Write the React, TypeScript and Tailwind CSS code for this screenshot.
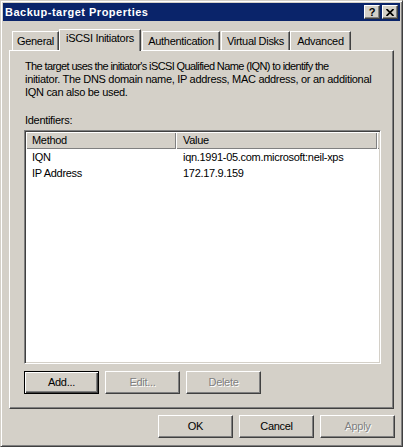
import React from 'react'

const raised =
  'border border-t-white border-l-white border-r-[#404040] border-b-[#404040] shadow-[inset_-1px_-1px_0_#808080]'

function Button({ label, disabled, isDefault }: { label: string; disabled?: boolean; isDefault?: boolean }) {
  const frame = isDefault
    ? 'border border-black shadow-[inset_1px_1px_0_#fff,inset_-1px_-1px_0_#404040,inset_-2px_-2px_0_#808080]'
    : raised
  return (
    <div className={`w-[75px] h-[23px] flex items-center justify-center bg-[#d4d0c8] ${frame}`}>
      <span
        className={
          disabled ? 'text-[#808080] [text-shadow:1px_1px_0_#fff]' : 'text-black'
        }
      >
        {label}
      </span>
    </div>
  )
}

function Tab({ label, width, selected, className = '' }: { label: string; width: string; selected?: boolean; className?: string }) {
  if (selected) {
    return (
      <div
        className={`${width} h-[22px] -mb-px relative z-10 bg-[#d4d0c8] border-t border-l border-r border-t-white border-l-white border-r-[#404040] shadow-[inset_-1px_0_0_#808080] flex justify-center pt-[2px] ${className}`}
      >
        {label}
      </div>
    )
  }
  return (
    <div
      className={`${width} h-[19px] bg-[#d4d0c8] border-t border-l border-r border-t-white border-l-white border-r-[#404040] shadow-[inset_-1px_0_0_#808080] flex justify-center pt-[3px] ${className}`}
    >
      {label}
    </div>
  )
}

export default function App() {
  const rows = [
    { method: 'IQN', value: 'iqn.1991-05.com.microsoft:neil-xps' },
    { method: 'IP Address', value: '172.17.9.159' },
  ]

  return (
    <div className="w-[403px] h-[447px] bg-[#d4d0c8] font-['Liberation_Sans',Arial,sans-serif] text-[11px] leading-[13px] tracking-[-0.3px] text-black">
      <div className="h-full border border-t-[#d4d0c8] border-l-[#d4d0c8] border-r-[#404040] border-b-[#404040] shadow-[inset_1px_1px_0_#fff,inset_-1px_-1px_0_#808080] p-[2px] flex flex-col">
        {/* title bar */}
        <div className="h-[18px] bg-[#0a246a] flex items-center justify-between pl-[2px] pr-[2px]">
          <span className="text-white font-bold tracking-[0.5px]">Backup-target Properties</span>
          <div className="flex gap-[2px]">
            <div className={`w-[16px] h-[14px] bg-[#d4d0c8] ${raised} flex items-center justify-center`}>
              <span className="font-bold text-[11px] leading-none tracking-normal">?</span>
            </div>
            <div className={`w-[16px] h-[14px] bg-[#d4d0c8] ${raised} flex items-center justify-center`}>
              <svg width="8" height="7" viewBox="0 0 8 7">
                <path d="M0.5 0 L7.5 7 M7.5 0 L0.5 7" stroke="#000" strokeWidth="1.7" />
              </svg>
            </div>
          </div>
        </div>

        <div className="px-[6px]">
          {/* tabs */}
          <div className="h-[21px] mt-[8px] flex items-end">
            <Tab label="General" width="w-[47px]" className="ml-[3px]" />
            <Tab label="iSCSI Initiators" width="w-[82px]" selected />
            <Tab label="Authentication" width="w-[78px]" className="ml-[1px]" />
            <Tab label="Virtual Disks" width="w-[69px]" className="ml-[1px]" />
            <Tab label="Advanced" width="w-[61px]" />
          </div>

          {/* tab page */}
          <div className="h-[359px] border border-t-white border-l-white border-r-[#404040] border-b-[#404040] shadow-[inset_-1px_-1px_0_#808080] pl-[14px] pr-[12px] pt-[9px]">
            <p className="ml-[1px]">
              <span className="tracking-[-0.62px]">
                The target uses the initiator's iSCSI Qualified Name (IQN) to identify the
              </span>
              <br />
              initiator. The DNS domain name, IP address, MAC address, or an additional
              <br />
              IQN can also be used.
            </p>
            <p className="ml-[1px] mt-[15px]">Identifiers:</p>

            <div className="mt-[3px] h-[234px] bg-white border border-t-[#808080] border-l-[#808080] border-r-white border-b-white shadow-[inset_1px_1px_0_#404040,inset_-1px_-1px_0_#d4d0c8] p-px">
              <div className="flex h-[17px] bg-[#d4d0c8]">
                <div className="w-[150px] flex items-center pl-[6px] shadow-[inset_1px_1px_0_#fff,inset_-1px_-1px_0_#808080]">
                  Method
                </div>
                <div className="w-[201px] flex items-center pl-[7px] shadow-[inset_1px_1px_0_#fff,inset_-1px_-1px_0_#808080]">
                  Value
                </div>
                <div className="flex-1 shadow-[inset_1px_1px_0_#fff,inset_0_-1px_0_#808080]" />
              </div>
              {rows.map((r) => (
                <div key={r.method} className="flex h-[16px] items-center">
                  <div className="w-[150px] pl-[6px]">{r.method}</div>
                  <div className="w-[201px] pl-[7px]">{r.value}</div>
                </div>
              ))}
            </div>

            <div className="mt-[7px] flex gap-[6px]">
              <Button label="Add..." isDefault />
              <Button label="Edit..." disabled />
              <Button label="Delete" disabled />
            </div>
          </div>

          {/* dialog buttons */}
          <div className="mt-[6px] flex justify-end gap-[6px] -mr-px">
            <Button label="OK" />
            <Button label="Cancel" />
            <Button label="Apply" disabled />
          </div>
        </div>
      </div>
    </div>
  )
}
